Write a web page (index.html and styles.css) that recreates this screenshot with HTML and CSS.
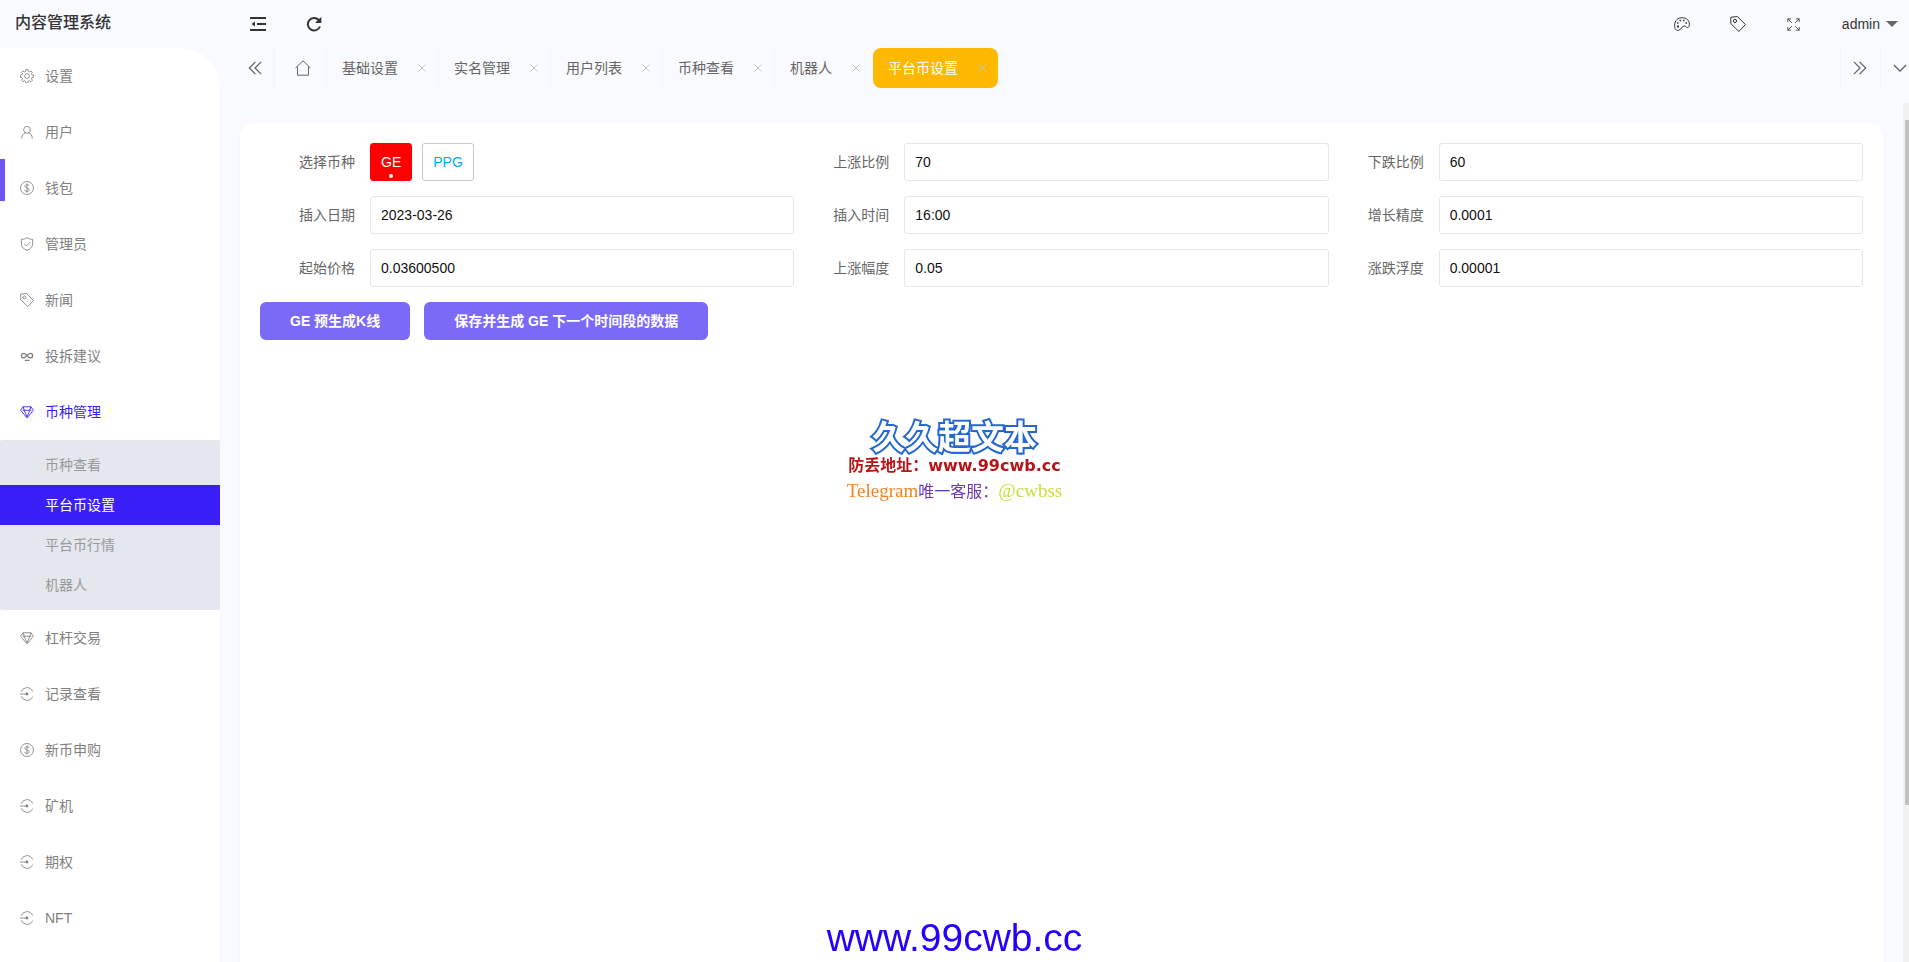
FILE: index.html
```html
<!DOCTYPE html>
<html lang="zh-CN">
<head>
<meta charset="utf-8">
<title>内容管理系统</title>
<link rel="stylesheet" href="styles.css">
</head>
<body>
<svg class="sprite" aria-hidden="true">
  <symbol id="gear" viewBox="0 0 16 16"><circle cx="8" cy="8" r="2.7"/><path d="M6.800 .7h2.400l.4 2 1.300.6 1.700-1.100 1.600 1.600-1.100 1.700.6 1.300 2 .4v2.300l-2 .4-.6 1.300 1.100 1.700-1.600 1.600-1.700-1.100-1.300.6-.4 1.900H6.800l-.4-1.900-1.300-.6-1.700 1.100-1.600-1.600 1.100-1.700-.6-1.300-2-.4V7.200l2-.4.6-1.300-1.100-1.700 1.600-1.600 1.700 1.100 1.300-.6z"/></symbol>
  <symbol id="user" viewBox="0 0 16 16"><circle cx="8" cy="5.500" r="3.900"/><path d="M2 15.500c0-3.500 1.600-5.500 4-6.500M14 15.500c0-3.500-1.600-5.500-4-6.500"/></symbol>
  <symbol id="dollar" viewBox="0 0 16 16"><circle cx="8" cy="8" r="7.400"/><path d="M10.400 5.800C10.200 4.600 9.200 4.200 8 4.200s-2.400.5-2.400 1.800c0 2.600 4.900 1.300 4.900 4 0 1.300-1.200 1.900-2.500 1.900S5.600 11.300 5.400 10M8 2.800v10.400"/></symbol>
  <symbol id="shield" viewBox="0 0 16 16"><path d="M8 .8c2 1.300 4 1.800 6.400 1.900v5.800c0 3-2.700 5.200-6.400 6.800-3.700-1.600-6.400-3.800-6.400-6.800V2.700C4 2.600 6 2.100 8 .8zM4.800 7.800l2.400 2.400 4.200-4.200"/></symbol>
  <symbol id="tag" viewBox="0 0 16 16"><path d="M.8 1.200 7.500.6l7.900 8-6.500 6.900L.8 7.600z"/><circle cx="5" cy="5" r="1.600"/></symbol>
  <symbol id="infinity" viewBox="0 0 16 16"><path stroke-width="1.500" d="M8 7.500C6.500 5.500 5.500 5 4.200 5a2.500 2.500 0 0 0 0 5.200C6.500 10.200 9 5 11.800 5a2.500 2.500 0 0 1 0 5.200C10.400 10.200 9.500 9.500 8 7.500M5.500 13h5.500"/></symbol>
  <symbol id="gem" viewBox="0 0 16 16"><path d="M3.500 2h9l2.800 4L8 14.800.7 6zM3 6h10M4.700 6 8 13.500 11.300 6M3.500 2l1.400 4M11.100 6l1.400-4"/></symbol>
  <symbol id="record" viewBox="0 0 16 16"><path d="M1.300 5.500a7.100 7.100 0 0 1 13.200-.5M1.300 10.500a7.100 7.100 0 0 0 13.200.5M0 8h7"/><circle class="dot" cx="8" cy="8" r="1.600"/></symbol>
  <symbol id="cross" viewBox="0 0 8 8"><path d="M.5.5l7 7M7.500.5l-7 7"/></symbol>
</svg>

<header class="header">
  <h1 class="logo">内容管理系统</h1>
  <div class="header-tools">
    <button class="icon-button" aria-label="收起菜单"><svg class="icon dark" viewBox="0 0 16 16"><path d="M0 2h16M7 8h9M0 14h16"/><path class="dot" d="M5 5.500v5L1.500 8z"/></svg></button>
    <button class="icon-button" aria-label="刷新"><svg class="icon dark" viewBox="0 0 16 16"><path d="M14 10.500A6.300 6.300 0 1 1 12.800 4"/><path class="dot" d="M15.300.8v6.300H9z"/></svg></button>
  </div>
  <div class="header-user">
    <button class="icon-button" aria-label="主题"><svg class="icon palette" viewBox="0 0 16 16"><path d="M4.500 14.300C2 15 .5 12.500.6 9 .7 4.500 4 1.700 8.200 1.700c4.500 0 7.200 3 7.200 6.500 0 2-.7 3.400-1.800 3.300-1.500 0-1.800-1.700-3.400-1.600-2.500.2-2.500 3.600-5.700 4.400z"/><path class="dot" d="M3 9.500h2v2H3zM3 6.300h1.500v1.500H3zM5.500 3.800H7v1.500H5.500zM9 3.800h1.500v1.500H9zM11.500 6.300H13v1.500h-1.500z"/></svg></button>
    <button class="icon-button" aria-label="便签"><svg class="icon"><use href="#tag"/></svg></button>
    <button class="icon-button" aria-label="全屏"><svg class="icon small" viewBox="0 0 16 16"><path d="M1 5V1h4M1 1l5 5M11 1h4v4M15 1l-5 5M1 11v4h4M1 15l5-5M15 11v4h-4M15 15l-5-5"/></svg></button>
    <button class="account">admin<span class="caret"></span></button>
  </div>
</header>

<div class="body">
  <nav class="sidebar">
    <a class="item" href="#"><svg class="icon"><use href="#gear"/></svg>设置</a>
    <a class="item" href="#"><svg class="icon"><use href="#user"/></svg>用户</a>
    <a class="item marked" href="#"><svg class="icon"><use href="#dollar"/></svg>钱包</a>
    <a class="item" href="#"><svg class="icon"><use href="#shield"/></svg>管理员</a>
    <a class="item" href="#"><svg class="icon"><use href="#tag"/></svg>新闻</a>
    <a class="item" href="#"><svg class="icon"><use href="#infinity"/></svg>投拆建议</a>
    <a class="item open" href="#"><svg class="icon"><use href="#gem"/></svg>币种管理</a>
    <div class="submenu">
      <a class="subitem" href="#">币种查看</a>
      <a class="subitem current" href="#">平台币设置</a>
      <a class="subitem" href="#">平台币行情</a>
      <a class="subitem" href="#">机器人</a>
    </div>
    <a class="item" href="#"><svg class="icon"><use href="#gem"/></svg>杠杆交易</a>
    <a class="item" href="#"><svg class="icon"><use href="#record"/></svg>记录查看</a>
    <a class="item" href="#"><svg class="icon"><use href="#dollar"/></svg>新币申购</a>
    <a class="item" href="#"><svg class="icon"><use href="#record"/></svg>矿机</a>
    <a class="item" href="#"><svg class="icon"><use href="#record"/></svg>期权</a>
    <a class="item" href="#"><svg class="icon"><use href="#record"/></svg>NFT</a>
  </nav>

  <div class="main">
    <div class="tabs">
      <button class="tab-control first" aria-label="向左"><svg class="icon" viewBox="0 0 16 16"><path d="M8.500 1 1.500 8l7 7M15 1 8 8l7 7"/></svg></button>
      <button class="tab-home" aria-label="主页"><svg class="icon home" viewBox="0 0 16 16"><path d="M.5 8 8 .8 15.500 8M2.500 6.500v8.700h11V6.500"/></svg></button>
      <div class="tab">基础设置<button class="close" aria-label="关闭"><svg><use href="#cross"/></svg></button></div>
      <div class="tab">实名管理<button class="close" aria-label="关闭"><svg><use href="#cross"/></svg></button></div>
      <div class="tab">用户列表<button class="close" aria-label="关闭"><svg><use href="#cross"/></svg></button></div>
      <div class="tab">币种查看<button class="close" aria-label="关闭"><svg><use href="#cross"/></svg></button></div>
      <div class="tab last">机器人<button class="close" aria-label="关闭"><svg><use href="#cross"/></svg></button></div>
      <div class="tab active">平台币设置<button class="close" aria-label="关闭"><svg><use href="#cross"/></svg></button></div>
      <div class="tabs-end">
        <button class="tab-control" aria-label="向右"><svg class="icon" viewBox="0 0 16 16"><path d="M1 1l7 7-7 7M7.500 1l7 7-7 7"/></svg></button>
        <button class="tab-control" aria-label="更多"><svg class="icon" viewBox="0 0 16 16"><path d="M1 4.500l7 7 7-7"/></svg></button>
      </div>
    </div>

    <div class="frame">
      <form class="card">
        <div class="fields">
          <div class="field">
            <span class="label">选择币种</span>
            <div class="coins">
              <label class="coin"><input type="radio" name="coin" checked>GE</label>
              <label class="coin"><input type="radio" name="coin">PPG</label>
            </div>
          </div>
          <div class="field"><label class="label" for="up">上涨比例</label><input class="input" id="up" value="70"></div>
          <div class="field"><label class="label" for="down">下跌比例</label><input class="input" id="down" value="60"></div>
          <div class="field"><label class="label" for="date">插入日期</label><input class="input" id="date" value="2023-03-26"></div>
          <div class="field"><label class="label" for="time">插入时间</label><input class="input" id="time" value="16:00"></div>
          <div class="field"><label class="label" for="step">增长精度</label><input class="input" id="step" value="0.0001"></div>
          <div class="field"><label class="label" for="price">起始价格</label><input class="input" id="price" value="0.03600500"></div>
          <div class="field"><label class="label" for="range">上涨幅度</label><input class="input" id="range" value="0.05"></div>
          <div class="field"><label class="label" for="float">涨跌浮度</label><input class="input" id="float" value="0.00001"></div>
        </div>
        <div class="actions">
          <button class="button" type="button">GE 预生成K线</button>
          <button class="button" type="button">保存并生成 GE 下一个时间段的数据</button>
        </div>
      </form>
      <div class="scrollbar"><span class="thumb"></span></div>
    </div>
  </div>
</div>

<div class="brand">
  <div class="brand-name">久久超文本</div>
  <div class="brand-address">防丢地址：<span class="brand-url">www.99cwb.cc</span></div>
  <div class="brand-contact"><span class="orange">Telegram</span><span class="purple">唯一客服：</span><span class="lime">@cwbss</span></div>
</div>
<div class="site-url">www.99cwb.cc</div>
</body>
</html>
```
FILE: styles.css
```css
* { box-sizing: border-box; }

body {
  margin: 0;
  height: 100vh;
  overflow: hidden;
  display: flex;
  flex-direction: column;
  background: #f9faff;
  color: #666;
  font: 14px/24px "Liberation Sans", "Noto Sans CJK SC", sans-serif;
}

a { color: inherit; text-decoration: none; }

button {
  padding: 0;
  border: 0;
  background: none;
  color: inherit;
  font: inherit;
}

.sprite { display: none; }

.icon {
  width: 14px;
  height: 14px;
  flex: none;
  fill: none;
  stroke: currentColor;
  stroke-width: 1;
}

.dot { fill: currentColor; stroke: none; }

/* Header */
.header {
  height: 48px;
  flex: none;
  display: flex;
  color: #333;
}

.logo {
  width: 220px;
  margin: 0;
  padding-left: 15px;
  font-size: 16px;
  font-weight: 500;
  line-height: 46px;
}

.header-tools { display: flex; padding-left: 10px; }

.icon-button {
  width: 56px;
  display: flex;
  align-items: center;
  justify-content: center;
}

.header .icon { width: 16px; height: 16px; }
.header .icon.dark { stroke-width: 2; }
.header .icon.small { width: 13px; height: 13px; }

.header-user { display: flex; margin-left: auto; }

.account {
  display: flex;
  align-items: center;
  gap: 6px;
  padding: 0 11px 0 20px;
}

.caret {
  border: 6px solid transparent;
  border-top-color: #666;
  border-bottom: 0;
}

/* Sidebar */
.body { flex: 1; display: flex; min-height: 0; }

.sidebar {
  width: 220px;
  flex: none;
  overflow: hidden;
  background: #fff;
  border-top-right-radius: 40px;
  color: #808080;
}

.item {
  position: relative;
  height: 56px;
  display: flex;
  align-items: center;
  gap: 11px;
  padding-left: 20px;
}

.item.marked::before {
  content: "";
  position: absolute;
  left: 0;
  top: -1px;
  width: 5px;
  height: 42px;
  background: #6c56f8;
}

.item.open { color: #3b1ff7; }

.submenu {
  padding: 5px 0;
  background: #e4e7ed;
  border-radius: 2px;
  color: #999;
}

.subitem { display: block; padding-left: 45px; line-height: 40px; }
.subitem.current { background: #3b1ff7; color: #fff; }

/* Tabs */
.main { flex: 1; min-width: 0; display: flex; flex-direction: column; }

.tabs { height: 40px; flex: none; display: flex; overflow: hidden; }
.tabs .icon { stroke-width: 1.5; }
.tabs .icon.home { width: 16px; height: 16px; stroke-width: 1; }

.tab-control {
  width: 40px;
  flex: none;
  display: flex;
  align-items: center;
  justify-content: center;
  border-left: 1px solid #f4f4f6;
}

.tab-control.first { width: 54px; padding-left: 16px; border: 0; }

.tab-home {
  width: 53px;
  flex: none;
  display: flex;
  align-items: center;
  justify-content: center;
  padding-left: 4px;
  border: 1px solid #f4f4f6;
  border-width: 0 1px;
}

.tab {
  display: flex;
  align-items: center;
  padding: 0 12px 0 15px;
  gap: 20px;
  border-right: 1px solid #f4f4f6;
}

.tab.last { border-right-color: transparent; }
.tab.active { border: 0; border-radius: 8px; background: #ffb800; color: #fff; }

.close { width: 8px; height: 8px; display: flex; color: #c2c2c2; }
.close svg { width: 8px; height: 8px; stroke: currentColor; }

.tabs-end { display: flex; margin: 0 -11px 0 auto; }
.tabs-end .tab-control { padding-right: 2px; }

/* Content */
.frame { flex: 1; display: flex; min-height: 0; padding-top: 15px; }

.card {
  flex: 1;
  margin: 20px 20px 0;
  padding: 20px;
  background: #fff;
  border-radius: 14px 14px 0 0;
  box-shadow: 0 1px 2px rgba(0, 0, 0, .05);
}

.fields { display: grid; grid-template-columns: repeat(3, 1fr); row-gap: 15px; }
.field { display: flex; align-items: center; min-width: 0; }
.label { width: 110px; flex: none; padding-right: 15px; text-align: right; }

.input {
  flex: 1;
  min-width: 0;
  height: 38px;
  padding: 0 10px;
  border: 1px solid #e6e6e6;
  border-radius: 3px;
  background: #fff;
  color: #111;
  font: inherit;
}

.coins { display: flex; gap: 10px; }

.coin {
  position: relative;
  height: 38px;
  padding: 0 10px;
  border: 1px solid #c9c9c9;
  border-radius: 3px;
  color: #01aaed;
  line-height: 36px;
}

.coin input { position: absolute; inset: 0; margin: 0; appearance: none; }
.coin:has(:checked) { border-color: #f00; background: #f00; color: #fff; }

.coin:has(:checked)::after {
  content: "";
  position: absolute;
  left: 50%;
  bottom: 2px;
  width: 4px;
  height: 4px;
  margin-left: -2px;
  border-radius: 50%;
  background: #fff;
}

.actions { display: flex; gap: 14px; margin-top: 15px; }

.button {
  height: 38px;
  padding: 0 30px;
  border-radius: 6px;
  background: #7b69f8;
  color: #fff;
  font-weight: 700;
}

.scrollbar { width: 6px; flex: none; padding: 17px 0 17px 2px; background: #f1f1f1; }
.thumb { display: block; height: 83%; background: #c1c1c1; }

/* Overlays centred on the window */
.brand, .site-url {
  position: fixed;
  left: 0;
  right: 0;
  text-align: center;
  pointer-events: none;
}

.brand { top: 414px; color: #333; font-size: 16px; }

.brand-name {
  font: 700 33px/42px "Noto Sans CJK SC", sans-serif;
  color: #fff;
  -webkit-text-stroke: 4px #2468d0;
  paint-order: stroke fill;
  text-shadow: 0 2px 1px #2468d0;
}

.brand-address { color: #b81418; font-weight: 700; line-height: 20px; }
.brand-url { font-family: "DejaVu Sans", sans-serif; }
.brand-contact { font: 19px/30px "Liberation Serif", "Noto Sans CJK SC", serif; }
.orange { color: #f58220; }
.purple { color: #6a3ab2; font-size: 16px; }
.lime { color: #cddc39; }

.site-url { bottom: 0; color: #2400ff; font-size: 39px; line-height: 48px; }
```
